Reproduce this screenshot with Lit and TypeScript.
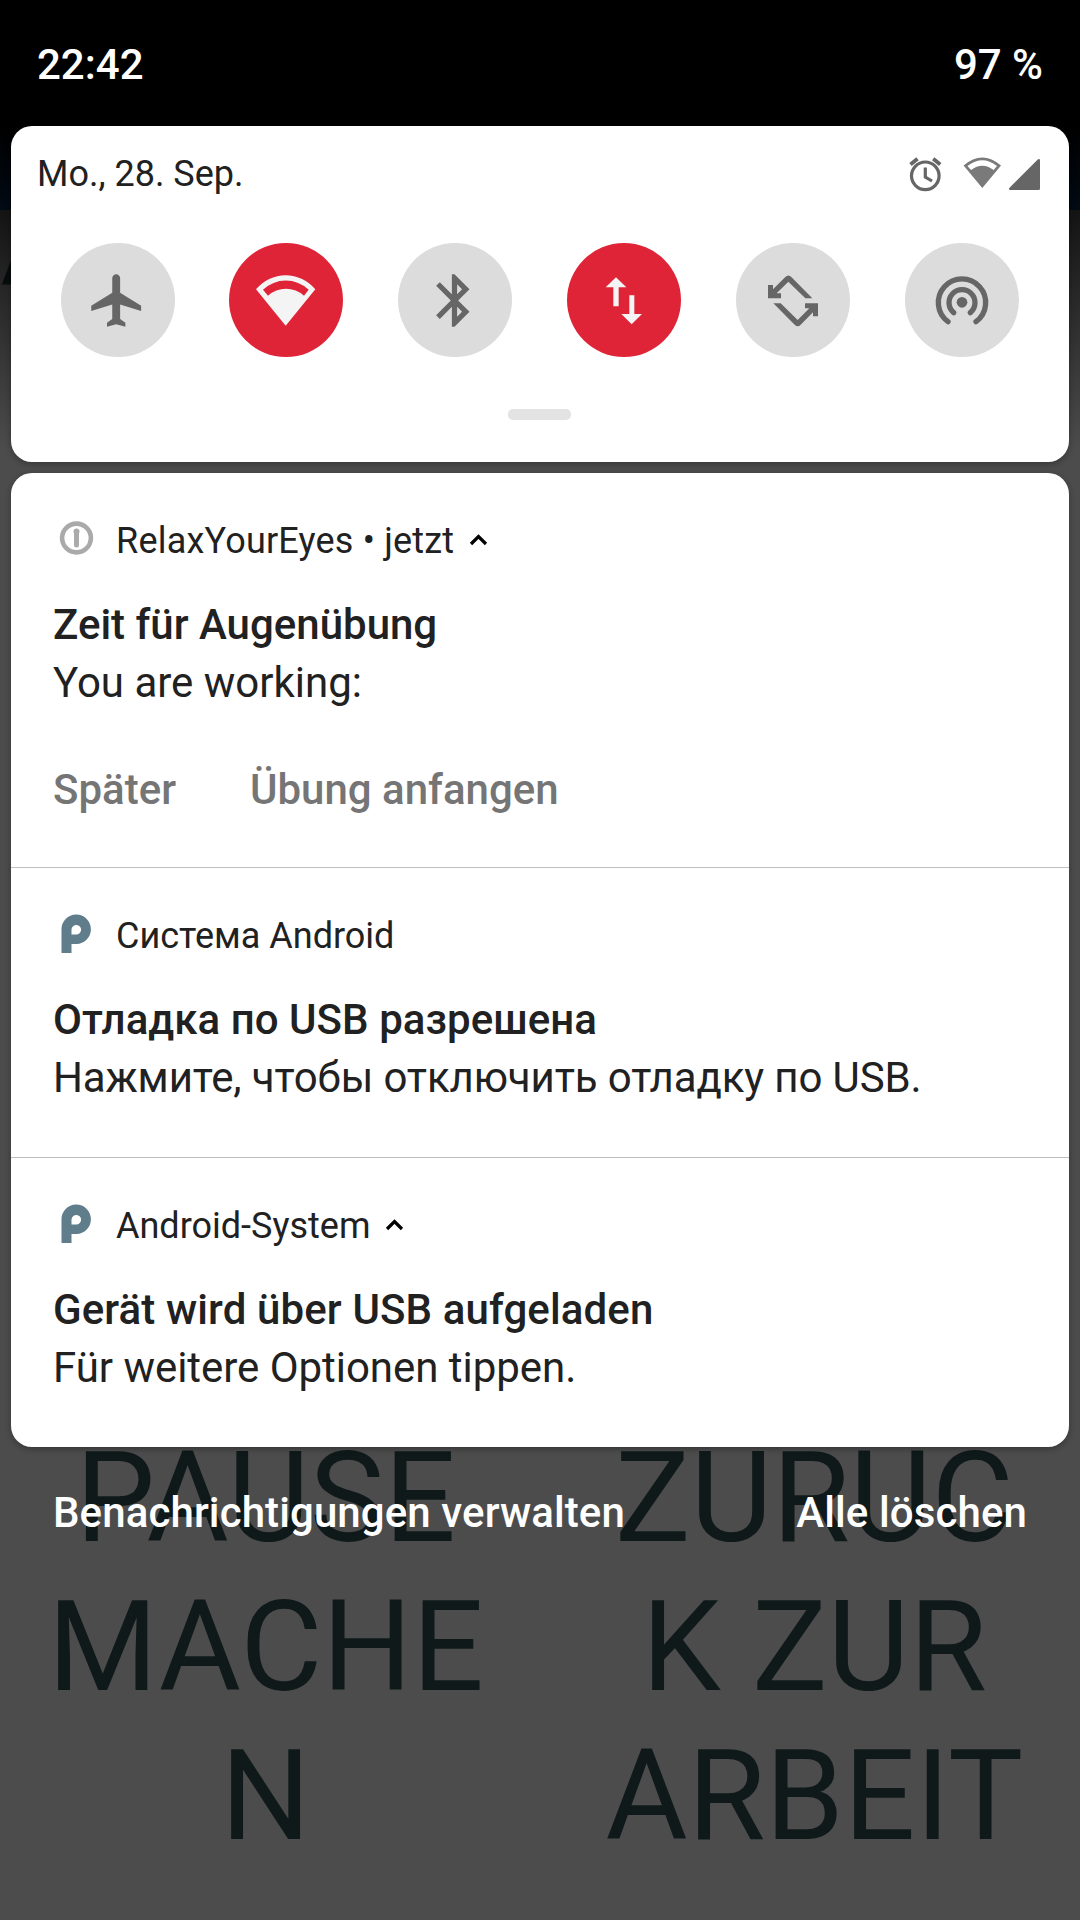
import { LitElement, html, css, svg, nothing } from "lit";
import { customElement, property } from "lit/decorators.js";

const airplane = svg`<svg class="mat" viewBox="0 0 24 24"><path d="M21 16v-2l-8-5V3.5c0-.83-.67-1.5-1.5-1.5S10 2.67 10 3.5V9l-8 5v2l8-2.5V19l-2 1.5V22l3.500-1 3.500 1v-1.500L13 19v-5.500l8 2.500z"/></svg>`;
const bluetooth = svg`<svg class="mat" viewBox="0 0 24 24"><path d="M17.71 7.71L12 2h-1v7.59L6.41 5 5 6.41 10.59 12 5 17.59 6.41 19 11 14.41V22h1l5.71-5.71-4.3-4.29 4.3-4.29zM13 5.83l1.88 1.88L13 9.59V5.83zm1.88 10.46L13 18.17v-3.76l1.88 1.88z"/></svg>`;
const wifi = svg`<svg class="full" viewBox="566 68 342 342"><path fill-rule="evenodd" d="M647 207A115 115 0 0 1 825 207L736 316ZM668 208L683 226A80 80 0 0 1 791 226L805 208A100 100 0 0 0 668 208Z"/></svg>`;
const data = svg`<svg class="full" viewBox="590 68 342 342"><path d="M737 171L768 201H745V258H729V201H706ZM777 225H792V281H815L784 312L753 281H777Z"/></svg>`;
const rotate = svg`<svg class="full" viewBox="78 68 342 342"><path d="M174 194H189V207L226 170Q235 161 244 170L307 234H286L235 184L200 219H213V234H174ZM324 288H309V276L272 313Q263 322 254 313L190 249H212L263 299L298 264H285V249H324Z"/></svg>`;
const hotspot = svg`<svg class="full" viewBox="585 68 342 342"><g fill="none" stroke="currentColor" stroke-width="16" stroke-linecap="round"><path d="M714 304A71 71 0 1 1 798 304"/><path d="M731 277A39 39 0 1 1 781 277"/></g><circle cx="756" cy="246" r="16"/></svg>`;

@customElement("quick-tile")
class QuickTile extends LitElement {
  @property({ type: Boolean, reflect: true }) active = false;
  @property({ attribute: false }) icon: unknown;
  static styles = css`
    :host { display: flex; align-items: center; justify-content: center; width: 114px; height: 114px; border-radius: 50%; background: #dcdcdc; color: #666; }
    :host([active]) { background: #df2437; color: #f4f4f4; }
    svg { display: block; fill: currentColor; }
    .mat { width: 63px; height: 63px; margin-right: 1px; }
    .full { width: 114px; height: 114px; }
  `;
  render() { return html`${this.icon}`; }
}

@customElement("notification-row")
class NotificationRow extends LitElement {
  @property() app = "";
  @property() glyph = "p";
  @property() heading = "";
  @property() body = "";
  @property({ type: Boolean }) expandable = false;
  @property({ attribute: false }) actions: string[] = [];
  static styles = css`
    :host { display: block; padding: 42px 42px 0; box-sizing: border-box; color: #212121; }
    .head { display: flex; align-items: center; height: 52px; font-size: 36px; line-height: 52px; }
    .icon { width: 47px; height: 47px; margin: 0 16px 3px 0; display: block; }
    .name { white-space: pre; letter-spacing: var(--name-track, 0); }
    .chevron { width: 22px; height: 16px; margin: 0 0 2px 14px; display: block; }
    .heading { margin-top: 33px; font-size: 42px; line-height: 50px; font-weight: 500; white-space: pre; letter-spacing: var(--heading-track, 0); }
    .body { margin-top: 8px; font-size: 42px; line-height: 50px; white-space: pre; letter-spacing: var(--body-track, 0); }
    .actions { display: flex; gap: 74px; margin-top: 57px; font-size: 42px; line-height: 50px; font-weight: 500; color: #757575; }
  `;
  render() {
    return html`
      <div class="head">
        ${this.glyph === "info"
          ? svg`<svg class="icon" viewBox="0 0 47 47"><circle cx="23.5" cy="22" r="14.4" fill="none" stroke="#aaa" stroke-width="4.6"/><path d="M23.5 17v12" stroke="#aaa" stroke-width="5" stroke-linecap="round"/><circle cx="23.5" cy="15.6" r="3" fill="#aaa"/></svg>`
          : svg`<svg class="icon" viewBox="0 0 47 47"><path fill="#607d8b" fill-rule="evenodd" d="M8.5 42V18.5A14.7 14.7 0 1 1 23.4 33H18.5V42ZM18.5 23.5H23A4.8 4.8 0 1 0 18.5 18.5Z"/></svg>`}
        <span class="name">${this.app}</span>
        ${this.expandable
          ? svg`<svg class="chevron" viewBox="0 0 22 16"><path d="M3 12L10.5 4.5L18 12" fill="none" stroke="#000" stroke-width="3.2"/></svg>`
          : nothing}
      </div>
      <div class="heading">${this.heading}</div>
      <div class="body">${this.body}</div>
      ${this.actions.length ? html`<div class="actions">${this.actions.map((a) => html`<span>${a}</span>`)}</div>` : nothing}
    `;
  }
}

@customElement("app-root")
class AppRoot extends LitElement {
  static styles = css`
    :host { display: block; position: relative; width: 1080px; height: 1920px; overflow: hidden; font-family: Roboto, sans-serif; background: #4c4c4c; }
    .behind { position: absolute; inset: 0; color: #0f1919; font-size: 126px; line-height: 149px; overflow: hidden; }
    .shade { position: absolute; inset: 0; background: linear-gradient(#000 0, #000 126px, rgba(0,0,0,0) 450px); }
    .appbar { position: absolute; left: 0; right: 0; top: 126px; height: 84px; background: linear-gradient(#000, #020a14); }
    .word { position: absolute; left: 0; top: 168px; }
    .choices { position: absolute; left: -8.5px; right: -8.5px; top: 1424px; display: grid; grid-template-columns: 1fr 1fr; text-align: center; white-space: pre; }
    .panel { position: relative; display: flex; flex-direction: column; padding: 0 11px; }
    .status { height: 126px; box-sizing: border-box; padding: 40px 26px 0 26px; display: flex; justify-content: space-between; font-size: 42px; line-height: 50px; font-weight: 500; color: #fff; }
    .card { background: #fff; border-radius: 21px; box-shadow: 0 2px 6px rgba(0,0,0,.3); }
    .quick { height: 336px; box-sizing: border-box; padding: 22px 28px 0 26px; display: flex; flex-direction: column; }
    .info { display: flex; justify-content: space-between; height: 52px; font-size: 36px; line-height: 52px; color: #212121; }
    .sys { display: block; width: 150px; height: 50px; margin: 2px -9px 0 0; }
    .tiles { display: flex; gap: 55px; margin: 43px 22px 0 24px; }
    .tiles quick-tile { flex: none; }
    .tiles quick-tile:first-child { margin-right: -1px; }
    .handle { width: 63px; height: 11px; border-radius: 5px; background: #e3e3e3; margin: 52px auto 0; }
    .list { margin-top: 11px; height: 974px; overflow: hidden; }
    .list-wrap { display: flex; flex-direction: column; }
    notification-row { height: 289px; }
    .reminder { height: 394px; --name-track: .2px; }
    .debug { --heading-track: .05px; --body-track: -.12px; }
    .charging { --heading-track: .12px; --body-track: -.04px; }
    .divider { height: 1px; background: #bfbfbf; }
    .foot { display: flex; justify-content: space-between; padding: 41px 42px 0; font-size: 42px; line-height: 50px; font-weight: 500; letter-spacing: .1px; color: #fff; }
  `;
  render() {
    return html`
      <div class="behind">
        <div class="word">A</div>
        <div class="choices"><span>PAUSE
MACHE
N</span><span>ZURÜC
K ZUR
ARBEIT</span></div>
        <div class="shade"></div>
        <div class="appbar"></div>
      </div>
      <div class="panel">
        <div class="status"><span>22:42</span><span>97 %</span></div>
        <div class="card quick">
          <div class="info">
            <span>Mo., 28. Sep.</span>
            <svg class="sys" viewBox="900 150 150 50">
              <g fill="none" stroke="#666" stroke-width="3.2">
                <circle cx="925.3" cy="175.8" r="13.8"/>
                <path d="M925.3 167.5V177L932 181"/>
                <path stroke-width="3.8" d="M910.5 164.5L917.5 158.8M933.2 158.8L940.2 164.5"/>
              </g>
              <path fill="#7a7a7a" fill-rule="evenodd" d="M963.6 165.5Q982.3 149.500 1001 165.500L982.300 188ZM967.500 166L971 170Q982.300 161.500 993.600 170L997 166Q982.300 154.500 967.500 166Z"/>
              <path fill="#666" d="M1038 159.300Q1040 158.500 1040 160.500V188.500Q1040 190 1038.500 190H1010.500Q1008 190 1009.500 187.700Z"/>
            </svg>
          </div>
          <div class="tiles">
            <quick-tile .icon=${airplane}></quick-tile>
            <quick-tile active .icon=${wifi}></quick-tile>
            <quick-tile .icon=${bluetooth}></quick-tile>
            <quick-tile active .icon=${data}></quick-tile>
            <quick-tile .icon=${rotate}></quick-tile>
            <quick-tile .icon=${hotspot}></quick-tile>
          </div>
          <div class="handle"></div>
        </div>
        <div class="card list">
          <div class="list-wrap">
            <notification-row class="reminder" glyph="info" app="RelaxYourEyes • jetzt" expandable heading="Zeit für Augenübung" body="You are working:" .actions=${["Später", "Übung anfangen"]}></notification-row>
            <div class="divider"></div>
            <notification-row class="debug" app="Система Android" heading="Отладка по USB разрешена" body="Нажмите, чтобы отключить отладку по USB."></notification-row>
            <div class="divider"></div>
            <notification-row class="charging" app="Android-System" expandable heading="Gerät wird über USB aufgeladen" body="Für weitere Optionen tippen."></notification-row>
          </div>
        </div>
        <div class="foot"><span>Benachrichtigungen verwalten</span><span>Alle löschen</span></div>
      </div>
    `;
  }
}
